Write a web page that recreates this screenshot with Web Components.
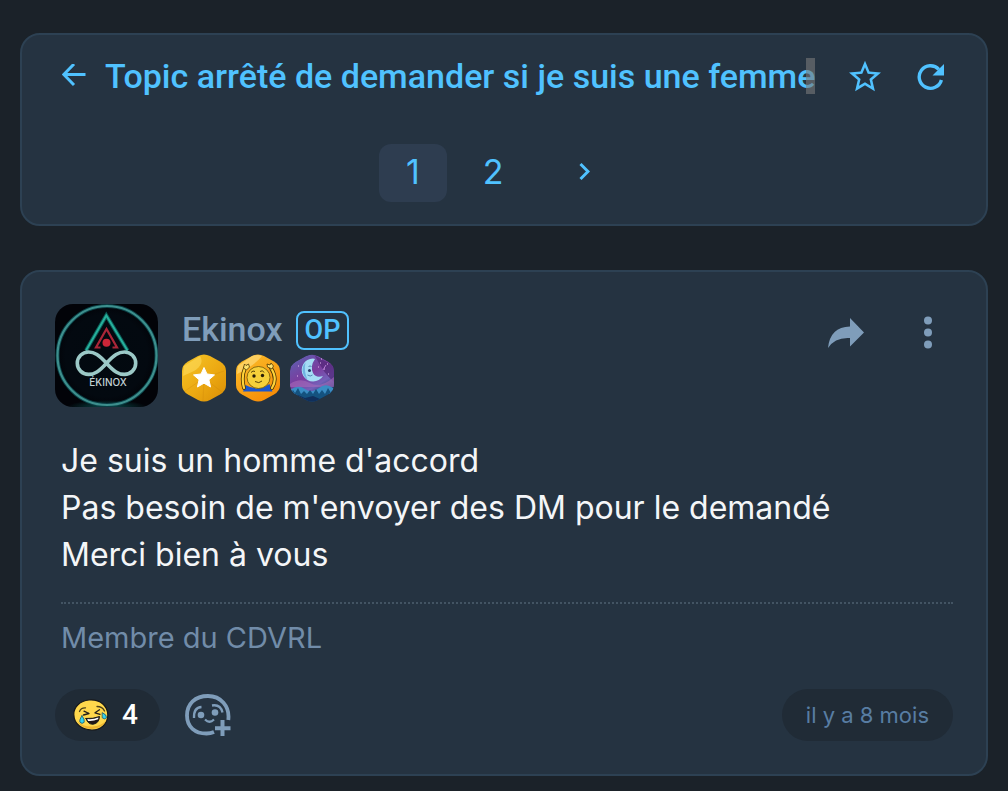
<!DOCTYPE html>
<html lang="fr">
<head>
<meta charset="utf-8">
<meta name="viewport" content="width=device-width, initial-scale=1">
<title>Topic arrêté de demander si je suis une femme</title>
<style>
  :root {
    --fond: #1b2229;
    --carte: #253341;
    --bordure: #2d4153;
    --accent: #50c2ff;
    --discret: #7f9dba;
    --pastille: #202b36;
  }
  body {
    margin: 0;
    padding: 33px 20px 15px;
    background: var(--fond);
    color: #f4f6f8;
    font-family: Inter, "Liberation Sans", sans-serif;
  }
  main {
    display: flex;
    flex-direction: column;
    gap: 44px;
  }
</style>
</head>
<body>
<main>
  <topic-header>
    Topic arrêté de demander si je suis une femm<topic-mark>e</topic-mark>
    <page-nav slot="pages" current="1" total="2"></page-nav>
  </topic-header>

  <forum-post>
    <user-avatar slot="avatar"></user-avatar>
    <span slot="author">Ekinox</span>
    <user-badge slot="badges" type="star"></user-badge>
    <user-badge slot="badges" type="wave"></user-badge>
    <user-badge slot="badges" type="moon"></user-badge>
    Je suis un homme d'accord<br>
    Pas besoin de m'envoyer des DM pour le demandé<br>
    Merci bien à vous
    <span slot="signature">Membre du CDVRL</span>
    <reaction-bar slot="reactions" count="4"></reaction-bar>
    <span slot="date">il y a 8 mois</span>
  </forum-post>
</main>

<script>
// Styles communs aux boutons et aux liens
const base = `
  * { box-sizing: border-box; }
  button {
    display: flex;
    align-items: center;
    justify-content: center;
    padding: 0;
    border: none;
    background: none;
    color: inherit;
    font: inherit;
    cursor: pointer;
  }
  a { color: inherit; text-decoration: none; }
  svg { display: block; }
`;

// En-tête du topic : retour, titre, favori, rafraîchir
class TopicHeader extends HTMLElement {
  constructor() {
    super();
    this.attachShadow({ mode: "open" });
  }

  connectedCallback() {
    this.shadowRoot.innerHTML = `
      <style>
        ${base}
        :host {
          display: flex;
          flex-direction: column;
          gap: 50px;
          box-sizing: border-box;
          padding: 23px 40px 22px;
          border: 2px solid var(--bordure);
          border-radius: 20px;
          background: var(--carte);
          color: var(--accent);
        }
        header {
          display: flex;
          align-items: center;
          height: 36px;
        }
        h1 {
          flex: 1;
          min-width: 0;
          margin: 0 24px 0 19px;
          font: 500 34px/36px Roboto, sans-serif;
          white-space: nowrap;
        }
        .actions { display: flex; gap: 36px; }
      </style>
      <header>
        <a href="#" aria-label="Retour">
          <svg width="24" height="24" viewBox="0 0 24 24" fill="none" stroke="currentColor" stroke-width="3"><path d="M12 0 1.800 10.500 12 21M2 10.500h21.500"/></svg>
        </a>
        <h1><slot></slot></h1>
        <div class="actions">
          <button type="button" aria-label="Ajouter aux favoris">
            <svg width="32" height="32" viewBox="2 1.500 20 20" fill="currentColor"><path d="M22 9.240l-7.190-.62L12 2 9.190 8.630 2 9.240l5.460 4.730L5.820 21 12 17.270 18.180 21l-1.630-7.030L22 9.240zM12 15.400l-3.760 2.270 1-4.280-3.320-2.880 4.380-.38L12 6.100l1.710 4.040 4.380.38-3.320 2.880 1 4.280L12 15.400z"/></svg>
          </button>
          <button type="button" aria-label="Rafraîchir">
            <svg width="29" height="32" viewBox="0 0 29 32"><path d="M24.400 20A11.300 11.300 0 1 1 21.800 9.300" fill="none" stroke="currentColor" stroke-width="3.400"/><path d="M27 4v11.500H15.500Z" fill="currentColor"/></svg>
          </button>
        </div>
      </header>
      <slot name="pages"></slot>
    `;
  }
}

// Lettre recouverte par la marque de sélection
class TopicMark extends HTMLElement {
  constructor() {
    super();
    this.attachShadow({ mode: "open" });
  }

  connectedCallback() {
    this.shadowRoot.innerHTML = `
      <style>
        :host { display: inline-block; position: relative; }
        :host::after {
          content: "";
          position: absolute;
          top: 0;
          bottom: 0;
          right: 0;
          width: 9px;
          background: rgba(122, 122, 122, 0.6);
        }
      </style>
      <slot></slot>
    `;
  }
}

// Pagination
class PageNav extends HTMLElement {
  constructor() {
    super();
    this.attachShadow({ mode: "open" });
  }

  connectedCallback() {
    const current = parseInt(this.getAttribute("current"));
    const total = parseInt(this.getAttribute("total"));
    let links = "";
    for (let i = 1; i <= total; i++) {
      links += `<a href="#page-${i}" ${i === current ? 'aria-current="page"' : ""}>${i}</a>`;
    }

    this.shadowRoot.innerHTML = `
      <style>
        ${base}
        :host { display: block; }
        nav {
          display: flex;
          justify-content: center;
          gap: 12px;
        }
        a {
          display: flex;
          align-items: center;
          justify-content: center;
          width: 68px;
          height: 58px;
          padding-bottom: 2px;
          border-radius: 12px;
          font: 400 34px/36px Inter, sans-serif;
        }
        a[aria-current] { background: #2e3d50; }
        a.next { width: 90px; }
      </style>
      <nav aria-label="Pages">
        ${links}
        <a class="next" href="#page-${current + 1}" aria-label="Page suivante">
          <svg width="12" height="20" viewBox="0 0 12 20" fill="none" stroke="currentColor" stroke-width="3"><path d="M2.500 2 10 9.500 2.500 17"/></svg>
        </a>
      </nav>
    `;
  }
}

// Avatar dessiné : cercle, triangle et infini
class UserAvatar extends HTMLElement {
  constructor() {
    super();
    this.attachShadow({ mode: "open" });
  }

  connectedCallback() {
    this.shadowRoot.innerHTML = `
      <style>
        :host {
          display: block;
          width: 103px;
          height: 103px;
          overflow: hidden;
          border-radius: 18px;
        }
        svg { display: block; }
      </style>
      <svg width="103" height="103" viewBox="0 0 103 103" fill="none" role="img" aria-label="Avatar de Ekinox">
        <defs>
          <radialGradient id="nuit"><stop offset="0" stop-color="#02090f"/><stop offset=".8" stop-color="#030910"/><stop offset="1" stop-color="#020308"/></radialGradient>
          <radialGradient id="lueur"><stop offset="0" stop-color="#0c6a68" stop-opacity=".7"/><stop offset="1" stop-color="#0c6a68" stop-opacity="0"/></radialGradient>
        </defs>
        <rect width="103" height="103" fill="url(#nuit)"/>
        <ellipse cx="52" cy="103" rx="40" ry="7" fill="url(#lueur)"/>
        <circle cx="52" cy="51.500" r="49.500" stroke="#0a3f45" stroke-width="4"/>
        <circle cx="52" cy="51.500" r="49.500" stroke="#3d8f8d" stroke-width="2.200"/>
        <path d="M31 46.500 51.300 11.500 72.500 46.500" stroke="#0b5a55" stroke-width="4"/>
        <path d="M31 46.500 51.300 11.500 72.500 46.500" stroke="#27b09c" stroke-width="2"/>
        <path d="M45.500 43.500h-4.500L51.500 25 62 43.500h-4.500" stroke="#a92638" stroke-width="2.200"/>
        <circle cx="51.500" cy="38.800" r="4" fill="#cc2638"/>
        <path d="M51.500 59.200C44 51 39.500 48 33.500 48a11.200 11.200 0 0 0 0 22.400C39.500 70.400 44 67.500 51.500 59.200S63.500 48 69.500 48a11.200 11.200 0 0 1 0 22.400C63.500 70.400 59 67.500 51.500 59.200Z" stroke="#9cc9c7" stroke-width="3.600"/>
        <text x="53" y="82" fill="#c3d1d5" font-family="Inter, sans-serif" font-size="10" font-weight="500" text-anchor="middle">ÉKINOX</text>
      </svg>
    `;
  }
}

// Badges hexagonaux
const hexagon = "M16 2Q22 -1 28 2L38 7.500Q44 11 44 17V31Q44 37 38 40.500L28 46Q22 49 16 46L6 40.500Q0 37 0 31V17Q0 11 6 7.500Z";

const badges = {
  star: {
    label: "Étoile",
    drawing: `
      <defs><linearGradient id="or" x2="1" y2="1"><stop stop-color="#f5c526"/><stop offset=".55" stop-color="#eca912"/><stop offset="1" stop-color="#d98e05"/></linearGradient></defs>
      <path d="${hexagon}" fill="url(#or)"/>
      <path d="M2 12 18 2q5 8-6 15L1 22Z" fill="#ffdf63" opacity=".55"/>
      <path d="M22 24 40 38M22 24 21 47M22 24 3 37M22 24 42 17" stroke="#c97f0a" opacity=".25"/>
      <path d="m22 13.500 3 6.500 7.500.9-5.600 4.900 1.700 7.200-6.600-3.800-6.600 3.800 1.700-7.200-5.600-4.900 7.500-.9Z" fill="#fff" stroke="#fff" stroke-linejoin="round"/>`
  },
  wave: {
    label: "Coucou",
    drawing: `
      <defs><linearGradient id="miel" x2=".6" y2="1"><stop stop-color="#fbc12d"/><stop offset="1" stop-color="#f78e08"/></linearGradient></defs>
      <path d="${hexagon}" fill="url(#miel)"/>
      <path d="M2 12 16 2q6-2 10 0Q18 12 1 20Z" fill="#ffe187" opacity=".6"/>
      <path d="M7 37.500 9.500 31q12 7 24-1l3 7.500Z" fill="#1b56cd"/>
      <g fill="none" stroke-linecap="round" stroke-linejoin="round">
        <path d="M8 34Q5 23 9 14M36 34Q42 25 35 14" stroke="#4b3604" stroke-width="3.800"/>
        <path d="M8 34Q5 23 9 14M36 34Q42 25 35 14" stroke="#ffd238" stroke-width="2.200"/>
      </g>
      <path d="M7.500 14 8.500 10l1.500 1.500 2.500-1.500 1 3-3 3ZM31.500 13l-.5-3 3 1 1-2 2.500 3-1.500 3Z" fill="#ffe36c" stroke="#4b3604" stroke-width=".8"/>
      <ellipse cx="22.500" cy="23.500" rx="11.500" ry="11" fill="#f6d03a" stroke="#6b5208" stroke-width=".8"/>
      <path d="M15 18.500q2-2.500 4-1M24 17.500q3-2 4 1M19 27.500q4 2.500 7-.5" fill="none" stroke="#5b4508"/>
      <circle cx="18" cy="22" r="1.700" fill="#281d09"/><circle cx="26.500" cy="21.500" r="1.700" fill="#281d09"/>`
  },
  moon: {
    label: "Nuit",
    drawing: `
      <defs>
        <clipPath id="forme"><path d="${hexagon}"/></clipPath>
        <linearGradient id="ciel" x2=".6" y2="1"><stop stop-color="#5866b4"/><stop offset=".5" stop-color="#7b3c9e"/><stop offset=".75" stop-color="#7460b9"/><stop offset="1" stop-color="#183567"/></linearGradient>
      </defs>
      <g clip-path="url(#forme)">
        <path d="${hexagon}" fill="url(#ciel)"/>
        <path d="M22 0 44 12V28Q34 20 25 2Z" fill="#512678" opacity=".7"/>
        <path d="M0 30q10-7 20-1t24-6v10H0Z" fill="#a66bbb" opacity=".6"/>
        <path d="M0 36q8-6 15-1t14-1 15 1v5H0Z" fill="#3a8dc4"/>
        <path d="m0 40 3-4 2 3 3-5 3 6 3-3 3 3 3-4 3 4 3-5 3 5 3-4 3 4 3-6 3 5 3-4 3 6v13H0Z" fill="#14527f"/>
        <path d="m0 44 8-3 7 3 8-2 7 3 8-4 6 3v6H0Z" fill="#102f5b"/>
        <path d="M23 4.500a11.500 11.500 0 1 0 10 17.500q-7 2.500-10-3-3-7 2-14Z" fill="#a5dcf5"/>
        <path d="M15.500 8.500a11.500 11.500 0 0 0 2 17q-4-8-2-17Z" fill="#6fb3e2"/>
        <path d="M18.500 12.500q1.500-1 3 0M17.500 21q3 2 5 0" fill="none" stroke="#4373a4" stroke-width=".8"/>
        <circle cx="19.500" cy="16.500" r="1.500" fill="#253b68"/>
        <path d="M30 9h1M34 15h1M37 10h1M28 13h1M38 20h1M8 12h1M7 22h1M31 5h1" stroke="#e4b9ef"/>
        <path d="m36 11-3 5" stroke="#b57bd4"/>
      </g>`
  }
};

class UserBadge extends HTMLElement {
  constructor() {
    super();
    this.attachShadow({ mode: "open" });
  }

  connectedCallback() {
    const badge = badges[this.getAttribute("type")];
    this.shadowRoot.innerHTML = `
      <style>
        :host { display: block; }
        svg { display: block; }
      </style>
      <svg width="44" height="48" viewBox="0 0 44 48" role="img" aria-label="${badge.label}">${badge.drawing}</svg>
    `;
  }
}

// Réactions sous le message
class ReactionBar extends HTMLElement {
  constructor() {
    super();
    this.attachShadow({ mode: "open" });
  }

  connectedCallback() {
    this.shadowRoot.innerHTML = `
      <style>
        ${base}
        :host {
          display: flex;
          align-items: center;
          gap: 25px;
        }
        .count {
          gap: 13px;
          height: 52px;
          padding: 0 22px 0 18px;
          border-radius: 26px;
          background: var(--pastille);
          color: #fff;
          font: 500 28px/32px Roboto, sans-serif;
        }
        .add { color: var(--discret); }
      </style>
      <button class="count" type="button">
        <svg width="36" height="32" viewBox="0 0 36 32" fill="none" stroke-linecap="round" stroke-linejoin="round" aria-hidden="true">
          <path d="M16 1C27 0 35 7 34.800 16.500 34.500 25 28 31 19 31 9 31 1 25 .8 15.500.6 8 7 1.800 16 1Z" fill="#ffd84c" stroke="#17191b" stroke-width="1.200"/>
          <path d="M4 22q5 8 15 8 10-.5 14.500-9-5 6-14 6.500Q10 28 4 22Z" fill="#efb52f"/>
          <path d="M6.500 12.500Q8 8.500 12.500 8.800M24 7.500q5.500 0 7.500 4.500" stroke="#4d4119" stroke-width="1.300"/>
          <path d="m11 12.200 5 2.300-5.500 1.500M26.500 10.800l-4.500 3 5 1.500" stroke="#24201a" stroke-width="1.300"/>
          <path d="M13 19.500q7 .5 13.500-2-.5 7-6.500 7.700-5 .3-7-5.700Z" fill="#211716" stroke="#17191b"/>
          <path d="M14.200 20q6 .6 11.300-1.500l-.4 1.800q-5 2.200-10 1.700Z" fill="#fff"/>
          <path d="M9 16.800Q6 21 7 23.300q2 2.200 4.200 0 .8-3-2.200-6.500ZM29.500 13.800q4.500 2 4 4.800-1.500 2.500-4 .4Z" fill="#36d3ee" stroke="#16556a" stroke-width=".8"/>
        </svg>
        <span>${this.getAttribute("count")}</span>
      </button>
      <button class="add" type="button" aria-label="Ajouter une réaction">
        <svg width="46" height="42" viewBox="0 0 46 42" fill="none" stroke="currentColor" aria-hidden="true">
          <path d="M43.300 26C45 12 35.500 2 23 2 10 2 2 10 2 21.500S10 39.500 21.500 39.500q4 0 7.500-1.500" stroke-width="3.800"/>
          <path d="M9 24q-.5-10.500 7.500-11M27 11.500q8.500-1.500 10.500 7" stroke-width="2.300"/>
          <circle cx="16" cy="21" r="3.300" fill="currentColor" stroke="none"/>
          <circle cx="30" cy="18.500" r="3.300" fill="currentColor" stroke="none"/>
          <path d="M20 25.500q4.500 4.500 9 0" stroke-width="2.200"/>
          <path d="M37.500 26v16M30 34.200h15.500" stroke-width="4"/>
        </svg>
      </button>
    `;
  }
}

// Message du forum
class ForumPost extends HTMLElement {
  constructor() {
    super();
    this.attachShadow({ mode: "open" });
  }

  connectedCallback() {
    this.shadowRoot.innerHTML = `
      <style>
        ${base}
        :host {
          display: block;
          box-sizing: border-box;
          padding: 32px 33px 33px;
          border: 2px solid var(--bordure);
          border-radius: 20px;
          background: var(--carte);
        }
        header {
          display: flex;
          align-items: flex-start;
          gap: 24px;
        }
        .identity { flex: 1; padding-top: 7px; }
        .author {
          display: flex;
          align-items: flex-start;
          gap: 13px;
          color: var(--discret);
          font: 500 34px/36px Roboto, sans-serif;
        }
        .op {
          padding: 0 7px;
          border: 2px solid var(--accent);
          border-radius: 8px;
          color: var(--accent);
          font-size: 27px;
          line-height: 35px;
        }
        .badges { display: flex; gap: 10px; margin-top: 4px; }
        .tools {
          display: flex;
          align-items: center;
          gap: 60px;
          padding: 12px 21px 0 0;
          color: var(--discret);
        }
        .content {
          padding: 30px 6px 24px;
          font-size: 32px;
          line-height: 47px;
        }
        .signature {
          margin: 0 0 0 6px;
          padding: 16px 0 33px;
          border-top: 2px dotted #435463;
          color: #718ca9;
          font-size: 29px;
          line-height: 36px;
        }
        footer {
          display: flex;
          align-items: center;
          justify-content: space-between;
        }
        .date {
          padding: 0 24px;
          border-radius: 26px;
          background: var(--pastille);
          color: #587da3;
          font-size: 22px;
          line-height: 52px;
        }
      </style>
      <article>
        <header>
          <slot name="avatar"></slot>
          <div class="identity">
            <div class="author"><slot name="author"></slot><span class="op">OP</span></div>
            <div class="badges"><slot name="badges"></slot></div>
          </div>
          <div class="tools">
            <button type="button" aria-label="Partager">
              <svg width="36" height="32" viewBox="0 0 36 32" fill="currentColor"><path d="M22 1 36 15.500 22 29.500V21Q7 20 0 31 2 10 22 9.500Z"/></svg>
            </button>
            <button type="button" aria-label="Options">
              <svg width="8" height="34" viewBox="0 0 8 34" fill="currentColor"><circle cx="4" cy="4.500" r="4"/><circle cx="4" cy="16.500" r="4"/><circle cx="4" cy="28.500" r="4"/></svg>
            </button>
          </div>
        </header>
        <div class="content"><slot></slot></div>
        <div class="signature"><slot name="signature"></slot></div>
        <footer>
          <slot name="reactions"></slot>
          <div class="date"><slot name="date"></slot></div>
        </footer>
      </article>
    `;
  }
}

customElements.define("topic-header", TopicHeader);
customElements.define("topic-mark", TopicMark);
customElements.define("page-nav", PageNav);
customElements.define("user-avatar", UserAvatar);
customElements.define("user-badge", UserBadge);
customElements.define("reaction-bar", ReactionBar);
customElements.define("forum-post", ForumPost);
</script>
</body>
</html>
